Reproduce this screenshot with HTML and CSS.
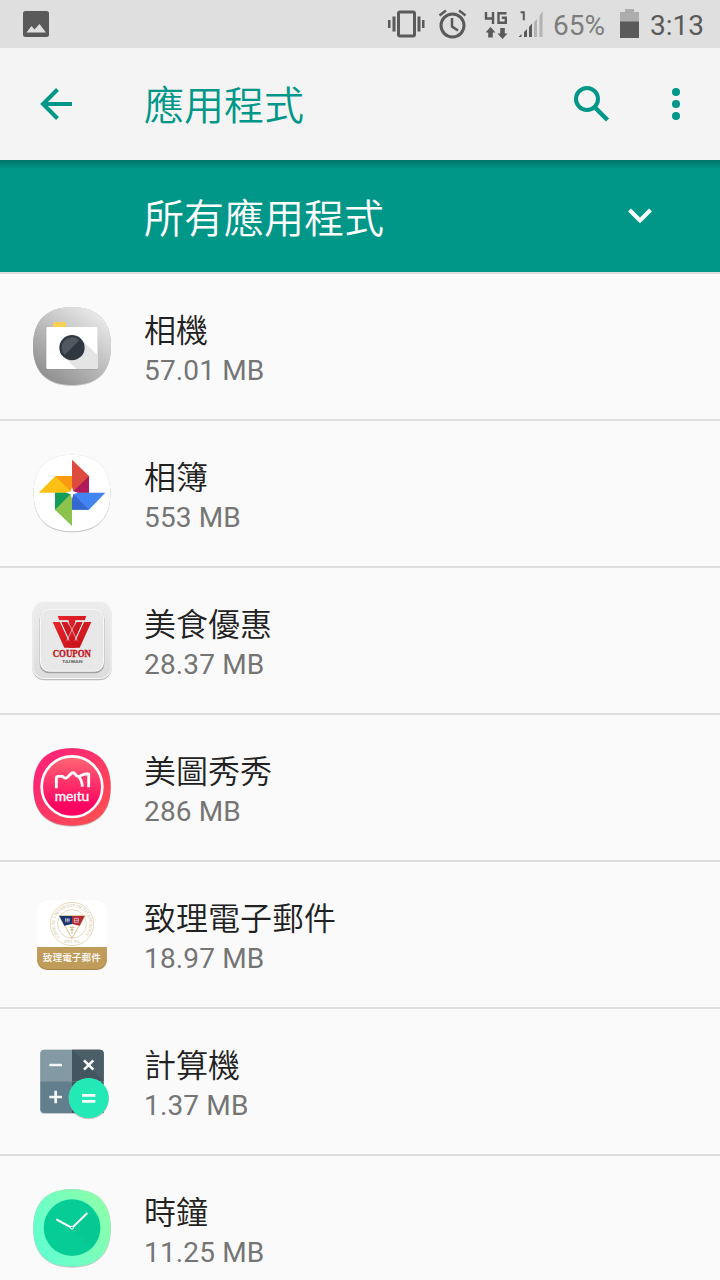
FILE: index.html
```html
<!DOCTYPE html>
<html lang="zh-Hant">
<head>
    <meta charset="UTF-8">
    <meta name="viewport" content="width=device-width, initial-scale=1.0">
    <title>應用程式</title>
    <link rel="stylesheet" href="styles.css">
</head>
<body>

<div class="status-bar">
    <svg class="picture-icon" width="26" height="26" viewBox="0 0 26 26">
        <rect width="26" height="26" rx="2.5" fill="#5a5a5a"/>
        <path d="M3.5 21.5L8.5 15L11.5 18.5L16.5 13L23 21.5z" fill="#dfdfdf"/>
    </svg>
    <div class="status-right">
        <svg width="156" height="48" viewBox="388 0 156 48" fill="#5a5a5a">
            <rect x="398.500" y="12" width="16" height="24" rx="1.500" fill="none" stroke="#5a5a5a" stroke-width="3"/>
            <path d="M388 20h2.500v8h-2.500zM392.500 16.500h3v15h-3zM417.500 16.500h3v15h-3zM422 20h2.500v8h-2.500z"/>
            <circle cx="452.500" cy="25.500" r="11.500" fill="none" stroke="#5a5a5a" stroke-width="3"/>
            <path d="M452 18v8.500l6 4M439.500 15.500l6.500-5M465.500 15.500l-6.500-5" fill="none" stroke="#5a5a5a" stroke-width="2.500"/>
            <path d="M486 12v6.500h8M493 12v12M506.500 13.200h-8v9.600h7.300v-5h-4" fill="none" stroke="#5a5a5a" stroke-width="2.400"/>
            <path d="M490.500 27l5 5.500h-2.700v5h-4.600v-5h-2.700zM502.500 39l-5-5.500h2.700v-5.500h4.600v5.500h2.700z"/>
            <path d="M520.500 12.200h3.300v8" fill="none" stroke="#5a5a5a" stroke-width="2"/>
            <path d="M518.500 37l3-3v3zM524 32l3-3v8h-3zM529 27l3-3.500v13.500h-3z"/>
            <path d="M534 22l3-3v18h-3zM539.500 16l3-5v26h-3z" fill="#b2b2b2"/>
        </svg>
        <span class="battery-level">65%</span>
        <svg class="battery" width="20" height="30" viewBox="0 0 20 30">
            <path d="M0 3h5V0h9v3h5v10H0z" fill="#adadad"/>
            <path d="M0 12.500h19V29H0z" fill="#5a5a5a"/>
        </svg>
        <span class="clock">3:13</span>
    </div>
</div>

<div class="toolbar">
    <svg class="back" width="32" height="32" viewBox="0 0 32 32" fill="none" stroke="#009788" stroke-width="4">
        <path d="M32 16H3M17.500 1.500L3 16l14.500 14.500"/>
    </svg>
    <h1>應用程式</h1>
    <svg class="search" width="36" height="36" viewBox="0 0 36 36" fill="none" stroke="#009788" stroke-width="4">
        <circle cx="13" cy="13" r="11"/>
        <path d="M21.500 22L33.500 34" stroke-width="4.500"/>
    </svg>
    <svg class="more" width="8" height="32" viewBox="0 0 8 32" fill="#009788">
        <circle cx="4" cy="4" r="4"/>
        <circle cx="4" cy="16" r="4"/>
        <circle cx="4" cy="28" r="4"/>
    </svg>
</div>

<div class="filter-bar">
    <span>所有應用程式</span>
    <svg width="24" height="16" viewBox="0 0 24 16" fill="none" stroke="#fff" stroke-width="4">
        <path d="M1.500 2L12 12.500L22.500 2"/>
    </svg>
</div>

<ul class="app-list">
    <li>
        <svg class="app-icon" viewBox="0 0 300 300">
            <defs>
                <linearGradient id="camBg" x1="0.200" y1="0.900" x2="0.800" y2="0.100">
                    <stop offset="0" stop-color="#929292"/>
                    <stop offset="1" stop-color="#e6e6e6"/>
                </linearGradient>
            </defs>
            <path class="shade" d="M33 150C33 74 74 33 150 33S267 74 267 150S226 267 150 267S33 226 33 150z"/>
            <path d="M33 150C33 74 74 33 150 33S267 74 267 150S226 267 150 267S33 226 33 150z" fill="url(#camBg)"/>
            <rect x="93" y="78" width="39" height="30" rx="7" fill="#fad053"/>
            <rect x="71" y="93" width="157" height="128" rx="5" fill="#8d8d8d" opacity="0.500"/>
            <rect x="73" y="93" width="154" height="126" rx="4" fill="#fff"/>
            <path d="M176 129L227 178v37q0 4-4 4H163L124 181z" fill="#e4e4e4"/>
            <circle cx="150" cy="155" r="38" fill="#2f3841"/>
            <path d="M128 177A31 31 0 0 1 172 133z" fill="#505960"/>
        </svg>
        <div class="app-info">
            <div class="app-name">相機</div>
            <div class="app-size">57.01 MB</div>
        </div>
    </li>
    <li>
        <svg class="app-icon" viewBox="0 0 300 300">
            <path class="shade" d="M35 150C35 74 74 35 150 35S265 74 265 150S226 265 150 265S35 226 35 150z"/>
            <path d="M35 150C35 74 74 35 150 35S265 74 265 150S226 265 150 265S35 226 35 150z" fill="#fff"/>
            <path d="M150 50L201 99V149H150z" fill="#dc4b3e"/>
            <path d="M201 99V149H150z" fill="#b01a5b"/>
            <path d="M50 149L100 99H150V149z" fill="#fdc116"/>
            <path d="M100 99H150V149z" fill="#fb9a11"/>
            <path d="M150 149H250L201 200H150z" fill="#4384f3"/>
            <path d="M150 149L201 200H150z" fill="#3568d0"/>
            <path d="M99 149H150V249L99 200z" fill="#8bc34c"/>
            <path d="M99 149H150L99 200z" fill="#129d5b"/>
            <path d="M150 132L154 145L168 149L154 154L150 168L146 154L132 149L146 145z" fill="#fff"/>
        </svg>
        <div class="app-info">
            <div class="app-name">相簿</div>
            <div class="app-size">553 MB</div>
        </div>
    </li>
    <li>
        <svg class="app-icon" viewBox="0 0 300 300">
            <defs>
                <linearGradient id="couponBg" x1="0" y1="0" x2="0" y2="1">
                    <stop offset="0" stop-color="#ececec"/>
                    <stop offset="1" stop-color="#dddddd"/>
                </linearGradient>
                <linearGradient id="couponRed" x1="0" y1="0" x2="1" y2="1">
                    <stop offset="0" stop-color="#e8262b"/>
                    <stop offset="1" stop-color="#c20f19"/>
                </linearGradient>
            </defs>
            <rect x="31" y="35" width="238" height="236" rx="36" fill="#bdbdbd"/>
            <rect x="31" y="33" width="238" height="234" rx="36" fill="#f7f7f7"/>
            <rect x="34" y="36" width="232" height="228" rx="33" fill="url(#couponBg)"/>
            <rect x="53" y="58" width="194" height="192" rx="28" fill="#a3a3a3"/>
            <rect x="54" y="56" width="192" height="189" rx="28" fill="#f8f8f8"/>
            <rect x="57" y="59" width="186" height="183" rx="26" fill="#e8e8e8"/>
            <path d="M107 78H193L188 91H160V173H140V91H112z" fill="url(#couponRed)"/>
            <path d="M92 96H114L150 173H127zM208 96H186L150 173H173z" fill="url(#couponRed)"/>
            <path d="M118 96H136L164 152L158 173H152zM182 96H164L136 152L142 173H148z" fill="#cf1720"/>
            <path d="M115 95L141 152M138 95L166 152M185 95L159 152M162 95L134 152M109 93H141M159 93H191" fill="none" stroke="#e8e8e8" stroke-width="2"/>
            <text class="coupon-text" x="92" y="201" textLength="115" lengthAdjust="spacingAndGlyphs">COUPON</text>
            <text class="taiwan-text" x="120" y="219" textLength="62" lengthAdjust="spacingAndGlyphs">TAIWAN</text>
        </svg>
        <div class="app-info">
            <div class="app-name">美食優惠</div>
            <div class="app-size">28.37 MB</div>
        </div>
    </li>
    <li>
        <svg class="app-icon" viewBox="0 0 300 300">
            <defs>
                <linearGradient id="meituBg" x1="0" y1="0" x2="1" y2="1">
                    <stop offset="0.200" stop-color="#fe2675"/>
                    <stop offset="1" stop-color="#ff544c"/>
                </linearGradient>
                <linearGradient id="meituIn" x1="0" y1="0" x2="0" y2="1">
                    <stop offset="0" stop-color="#ff6874"/>
                    <stop offset="0.800" stop-color="#fe0562"/>
                </linearGradient>
            </defs>
            <path class="shade" d="M34 150C34 74 74 34 150 34S266 74 266 150S226 266 150 266S34 226 34 150z"/>
            <path d="M34 150C34 74 74 34 150 34S266 74 266 150S226 266 150 266S34 226 34 150z" fill="url(#meituBg)"/>
            <circle cx="150" cy="149" r="91" fill="url(#meituIn)" stroke="#fff" stroke-width="8"/>
            <path d="M103 154V124Q103 118 109 118H122Q132 130 142 115Q153 101 160 112Q165 121 174 117L188 111H200V151M170 120Q180 128 181 149" fill="none" stroke="#fff" stroke-width="8.500" stroke-linejoin="round"/>
            <text class="meitu-text" x="98" y="193" textLength="104" lengthAdjust="spacingAndGlyphs">meıtu</text>
        </svg>
        <div class="app-info">
            <div class="app-name">美圖秀秀</div>
            <div class="app-size">286 MB</div>
        </div>
    </li>
    <li>
        <svg class="app-icon" viewBox="0 0 300 300">
            <rect x="45" y="48" width="210" height="206" rx="36" fill="#fff"/>
            <path d="M45 190H255V222Q255 258 219 258H81Q45 258 45 222z" fill="#a48243"/>
            <path d="M45 190H255V219Q255 255 219 255H81Q45 255 45 219z" fill="#c09c5a"/>
            <circle cx="150" cy="120" r="65" fill="none" stroke="#d9c59f" stroke-width="2"/>
            <circle cx="150" cy="120" r="43" fill="none" stroke="#d9c59f" stroke-width="2"/>
            <path id="sealRing" d="M113 157A52 52 0 1 1 187 157" fill="none"/>
            <text class="seal-text"><textPath href="#sealRing" textLength="240">CHIHLEE UNIVERSITY OF TECHNOLOGY</textPath></text>
            <text class="seal-year" x="126" y="178">SINCE 1965</text>
            <path d="M111 95H189L150 163z" fill="#fff" stroke="#cfb37a" stroke-width="2.500"/>
            <path d="M112 96H150V120L127 125z" fill="#19336f"/>
            <path d="M188 96H150V120L173 125z" fill="#b32b35"/>
            <path d="M131 102V115M136 102V115M141 102V115M129 108H144M157 103H169V115H157zM157 109H169" fill="none" stroke="#e9e4e4" stroke-width="2"/>
            <path d="M143 130H157M145 137H155M150 129V150" stroke="#cfb37a" stroke-width="3"/>
            <text class="mail-text" x="62" y="231" textLength="175">致理電子郵件</text>
        </svg>
        <div class="app-info">
            <div class="app-name">致理電子郵件</div>
            <div class="app-size">18.97 MB</div>
        </div>
    </li>
    <li>
        <svg class="app-icon" viewBox="0 0 300 300">
            <rect class="shade" x="55" y="56" width="190" height="190" rx="12"/>
            <path d="M67 56H150V151H55V68Q55 56 67 56z" fill="#8399a4"/>
            <path d="M150 56H233Q245 56 245 68V151H150z" fill="#43555e"/>
            <path d="M150 56H233Q245 56 245 68V151z" fill="#4b5e68"/>
            <path d="M55 151H150V246H67Q55 246 55 234z" fill="#617f8c"/>
            <path d="M150 151H245V246H150z" fill="#43555e"/>
            <path d="M82 102H120M82 198H120M101 179V217M186 88L214 116M214 88L186 116" stroke="#f4f6f7" stroke-width="8" fill="none"/>
            <circle class="shade" cx="200" cy="202" r="60"/>
            <circle cx="200" cy="201" r="60" fill="#23e9b7"/>
            <path d="M180 193H220M180 211H220" stroke="#fff" stroke-width="8"/>
        </svg>
        <div class="app-info">
            <div class="app-name">計算機</div>
            <div class="app-size">1.37 MB</div>
        </div>
    </li>
    <li>
        <svg class="app-icon" viewBox="0 0 300 300">
            <defs>
                <linearGradient id="clockBg" x1="0" y1="0.800" x2="1" y2="0.200">
                    <stop offset="0" stop-color="#60ffd3"/>
                    <stop offset="1" stop-color="#8dffa9"/>
                </linearGradient>
            </defs>
            <path class="shade" d="M34 150C34 74 74 34 150 34S266 74 266 150S226 266 150 266S34 226 34 150z"/>
            <path d="M34 150C34 74 74 34 150 34S266 74 266 150S226 266 150 266S34 226 34 150z" fill="url(#clockBg)"/>
            <circle cx="150" cy="149" r="85" fill="#06cd96"/>
            <path d="M150 149L196 105L228 116A85 85 0 0 1 209 210z" fill="#05c48f" opacity="0.600"/>
            <path d="M103 124L150 150L196 105" fill="none" stroke="#fff" stroke-width="6"/>
            <circle cx="150" cy="149" r="4.500" fill="#06cd96" stroke="#fff" stroke-width="3"/>
        </svg>
        <div class="app-info">
            <div class="app-name">時鐘</div>
            <div class="app-size">11.25 MB</div>
        </div>
    </li>
</ul>

</body>
</html>
```

FILE: styles.css
```css
* {
    box-sizing: border-box;
}
body {
    margin: 0;
    height: 1280px;
    overflow: hidden;
    background-color: #fafafa;
    font-family: Roboto, "Noto Sans CJK TC", sans-serif;
}
svg {
    display: block;
    flex-shrink: 0;
}
.status-bar {
    display: flex;
    align-items: center;
    justify-content: space-between;
    height: 48px;
    padding: 0 16px 0 23px;
    background-color: #dfdfdf;
}
.status-right {
    display: flex;
    align-items: center;
    height: 48px;
    font-size: 28px;
    line-height: 48px;
    padding-top: 3px;
}
.status-right > svg:first-child {
    margin-top: -3px;
}
.battery-level {
    width: 66px;
    margin-left: 9px;
    color: #7d7d7d;
}
.battery {
    margin: -3px 10px 0 1px;
}
.clock {
    color: #5a5a5a;
}
.toolbar {
    display: flex;
    align-items: center;
    height: 112px;
    padding: 0 40px;
    background-color: #f4f4f4;
    color: #009788;
}
.toolbar h1 {
    flex: 1;
    margin: 0 0 0 72px;
    padding-top: 6px;
    font-size: 40px;
    font-weight: 350;
    line-height: 56px;
}
.toolbar .search {
    margin-right: 62px;
}
.filter-bar {
    display: flex;
    align-items: center;
    justify-content: space-between;
    height: 112px;
    padding: 0 68px 0 144px;
    background: #009788 linear-gradient(rgba(0, 0, 0, 0.24), transparent) no-repeat 0 0 / 100% 9px;
    color: #fff;
    font-size: 40px;
    font-weight: 350;
}
.app-list {
    margin: 0;
    padding: 0;
    list-style: none;
    border-top: 2px solid #dedede;
}
.app-list li {
    display: flex;
    align-items: center;
    gap: 22px;
    height: 147px;
    padding-left: 22px;
    border-bottom: 2px solid #dedede;
}
.app-icon {
    width: 100px;
    height: 100px;
    margin-bottom: 2px;
}
.app-info {
    padding-top: 6px;
}
.app-name {
    height: 42px;
    color: #212121;
    font-size: 32px;
    font-weight: 350;
    line-height: 42px;
}
.app-size {
    height: 38px;
    color: #757575;
    font-size: 28px;
    letter-spacing: 0.15px;
    line-height: 38px;
}
.shade {
    fill: #bbb;
    filter: drop-shadow(0 3px 2px rgba(0, 0, 0, 0.2));
}
.coupon-text {
    fill: #c4141d;
    stroke: #c4141d;
    stroke-width: 1;
    font-family: "Liberation Serif", serif;
    font-size: 28px;
    font-weight: bold;
}
.taiwan-text {
    fill: #666;
    font-family: Roboto, sans-serif;
    font-size: 12px;
    font-weight: bold;
}
.meitu-text {
    fill: #fff;
    stroke: #fff;
    stroke-width: 1;
    font-family: Lato, sans-serif;
    font-size: 38px;
}
.seal-text {
    fill: #cfb88c;
    font-family: "Liberation Serif", serif;
    font-size: 13px;
}
.seal-year {
    fill: #cfb88c;
    font-family: "Liberation Serif", serif;
    font-size: 9px;
}
.mail-text {
    fill: #fff;
    font-size: 29px;
    font-weight: 500;
}
```
